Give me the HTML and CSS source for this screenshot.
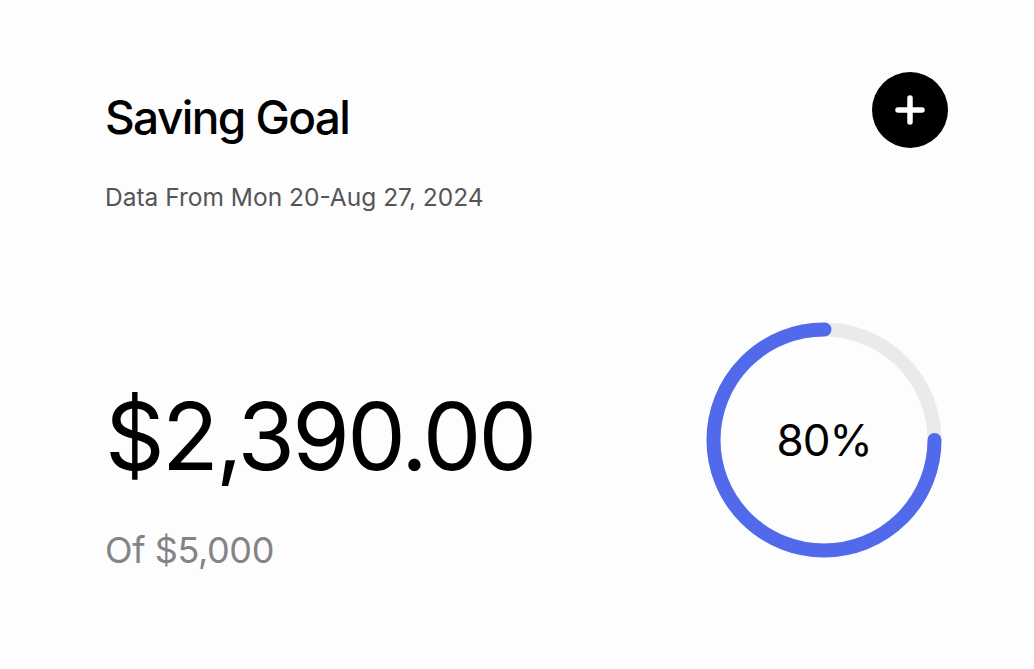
FILE: index.html
```html
<!DOCTYPE html>
<html>
<head>
<meta charset="utf-8">
<link rel="stylesheet" href="styles.css">
</head>
<body>
<div class="card">
  <div class="header">
    <div class="titles">
      <h1 class="title">Saving Goal</h1>
      <p class="subtitle">Data From Mon 20-Aug 27, 2024</p>
    </div>
    <button class="add-btn" aria-label="Add">
      <svg width="30" height="30" viewBox="0 0 30 30"><path d="M15 3V27M3 15H27" stroke="#fff" stroke-width="5.5" stroke-linecap="round"/></svg>
    </button>
  </div>
  <div class="body">
    <div class="amounts">
      <div class="amount">$2,390.00</div>
      <div class="goal">Of $5,000</div>
    </div>
    <div class="ring">
      <svg width="236" height="236" viewBox="0 0 236 236">
        <circle cx="118" cy="118" r="110.5" fill="none" stroke="#ebe9ec" stroke-width="14"/>
        <circle cx="118" cy="118" r="110.5" fill="none" stroke="#5169eb" stroke-width="14" stroke-linecap="round" stroke-dasharray="520.7 1000"/>
      </svg>
      <div class="pct">80%</div>
    </div>
  </div>
</div>
</body>
</html>
```
FILE: styles.css
```css
html, body {
  margin: 0;
  padding: 0;
  background: #fdfdfd;
}
body {
  font-family: Inter, "Noto Sans", sans-serif;
  color: #000;
}
.card {
  width: 1034px;
  height: 669px;
  box-sizing: border-box;
  padding: 72px 86px 0 105px;
}
.header {
  display: flex;
  justify-content: space-between;
  align-items: flex-start;
}
.title {
  margin: 0;
  font-size: 46px;
  font-weight: 500;
  letter-spacing: -1.6px;
  line-height: 92px;
  margin-top: -1px;
}
.subtitle {
  margin: 0;
  margin-top: 19px;
  font-size: 24.5px;
  line-height: 30px;
  color: #555558;
  letter-spacing: 0;
}
.add-btn {
  width: 76px;
  height: 76px;
  border-radius: 50%;
  border: none;
  background: #000;
  display: flex;
  align-items: center;
  justify-content: center;
  padding: 0;
}
.body {
  display: flex;
  justify-content: space-between;
  align-items: flex-start;
  margin-top: 110px;
  padding-right: 6px;
}
.amounts {
  margin-top: 59px;
}
.amount {
  font-size: 93px;
  font-weight: 400;
  letter-spacing: -2.7px;
  line-height: 110px;
}
.goal {
  font-size: 36px;
  color: #848386;
  letter-spacing: -0.4px;
  line-height: 44px;
  margin-top: 37px;
}
.ring {
  position: relative;
  width: 236px;
  height: 236px;
}
.ring svg { display: block; }
.pct {
  position: absolute;
  inset: 0;
  display: flex;
  align-items: center;
  justify-content: center;
  font-size: 44px;
  letter-spacing: -1px;
}
```
